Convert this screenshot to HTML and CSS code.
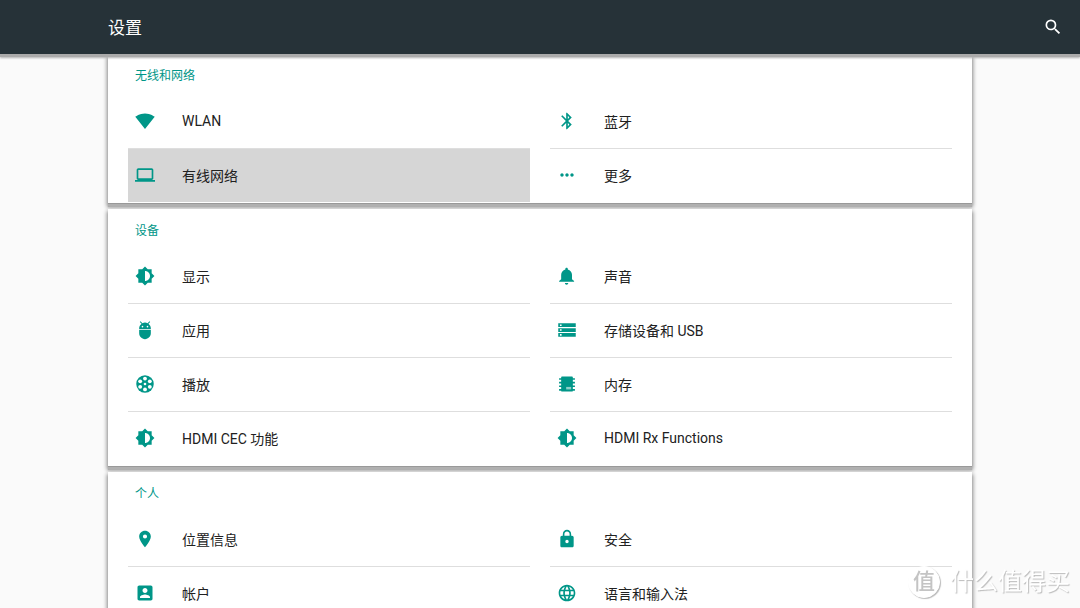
FILE: index.html
```html
<!DOCTYPE html>
<html lang="zh-CN">
<head>
<meta charset="utf-8">
<meta name="viewport" content="width=device-width, initial-scale=1">
<title>设置</title>
<link rel="stylesheet" href="styles.css">
</head>
<body>
<svg class="sprite" aria-hidden="true">
  <symbol id="brightness" viewBox="0 0 24 24"><path d="M20 15.31L23.31 12 20 8.69V4h-4.69L12 .69 8.69 4H4v4.69L.69 12 4 15.31V20h4.69L12 23.31 15.31 20H20v-4.69zM12 18V6c3.31 0 6 2.69 6 6s-2.69 6-6 6z"/></symbol>
</svg>
<header class="bar">
  <h1 class="bar-title">设置</h1>
  <button class="search" type="button" aria-label="搜索">
    <svg class="icon" viewBox="0 0 24 24"><path d="M15.5 14h-.79l-.28-.27A6.47 6.47 0 0 0 16 9.5 6.5 6.5 0 1 0 9.5 16c1.61 0 3.09-.59 4.23-1.57l.27.28v.79l5 4.99L20.49 19l-4.99-5zm-6 0C7.01 14 5 11.99 5 9.5S7.01 5 9.5 5 14 7.01 14 9.5 11.99 14 9.5 14z"/></svg>
  </button>
</header>
<main class="content">
  <section class="card">
    <h2 class="card-title">无线和网络</h2>
    <nav class="grid">
      <a class="item" href="#"><svg class="icon" viewBox="0 0 24 24"><path d="M12.01 21.49L23.64 7c-.45-.34-4.93-4-11.64-4C5.28 3 .81 6.66.36 7l11.63 14.49.01.01.01-.01z"/></svg>WLAN</a>
      <a class="item" href="#"><svg class="icon" viewBox="0 0 24 24"><path d="M17.71 7.71L12 2h-1v7.59L6.41 5 5 6.41 10.59 12 5 17.59 6.41 19 11 14.41V22h1l5.71-5.71-4.3-4.29 4.3-4.29zM13 5.83l1.88 1.88L13 9.59V5.83zm1.88 10.46L13 18.17v-3.76l1.88 1.88z"/></svg>蓝牙</a>
      <a class="item selected" href="#"><svg class="icon" viewBox="0 0 24 24"><path d="M20 18c1.100 0 1.990-.9 1.990-2L22 6c0-1.100-.9-2-2-2H4c-1.100 0-2 .9-2 2v10c0 1.100.9 2 2 2H0v2h24v-2h-4zM4 6h16v10H4V6z"/></svg>有线网络</a>
      <a class="item" href="#"><svg class="icon" viewBox="0 0 24 24"><path d="M6 10c-1.100 0-2 .9-2 2s.9 2 2 2 2-.9 2-2-.9-2-2-2zm12 0c-1.100 0-2 .9-2 2s.9 2 2 2 2-.9 2-2-.9-2-2-2zm-6 0c-1.100 0-2 .9-2 2s.9 2 2 2 2-.9 2-2-.9-2-2-2z"/></svg>更多</a>
    </nav>
  </section>
  <section class="card">
    <h2 class="card-title">设备</h2>
    <nav class="grid">
      <a class="item" href="#"><svg class="icon"><use href="#brightness"/></svg>显示</a>
      <a class="item" href="#"><svg class="icon" viewBox="0 0 24 24"><path d="M11.500 22.500c1.100 0 2-.9 2-2h-4c0 1.100.9 2 2 2zm6.500-6.500v-5.500c0-3.070-2.130-5.640-5-6.320V3.500c0-.83-.67-1.500-1.500-1.500S10 2.670 10 3.500v.68c-2.870.68-5 3.250-5 6.320V16l-2.500 2v1h18v-1L18 16z"/></svg>声音</a>
      <a class="item" href="#"><svg class="icon" viewBox="0 0 24 24"><path d="M5 16c0 3.870 3.130 7 7 7s7-3.130 7-7v-4H5v4zM16.120 4.370l2.100-2.100-.82-.83-2.300 2.310C14.160 3.280 13.120 3 12 3s-2.160.28-3.090.75L6.600 1.440l-.82.83 2.100 2.100C6.140 5.640 5 7.680 5 10v1h14v-1c0-2.320-1.140-4.360-2.880-5.630zM9 9c-.55 0-1-.45-1-1s.45-1 1-1 1 .45 1 1-.45 1-1 1zm6 0c-.55 0-1-.45-1-1s.45-1 1-1 1 .45 1 1-.45 1-1 1z"/></svg>应用</a>
      <a class="item" href="#"><svg class="icon" viewBox="0 0 24 24"><path d="M1.500 20h21v-4.500h-21V20zm2-3.250h2v2h-2v-2zM1.500 4v4.500h21V4h-21zm4 3.250h-2v-2h2v2zM1.500 14.250h21v-4.500h-21v4.500zM3.500 11h2v2h-2v-2z"/></svg>存储设备和 USB</a>
      <a class="item" href="#"><svg class="icon" viewBox="0 0 24 24"><circle cx="12" cy="12" r="10.500"/><g class="hole"><circle cx="12" cy="12" r="1.600"/><circle cx="12" cy="5.500" r="2.300"/><circle cx="17.800" cy="8.800" r="2.300"/><circle cx="17.800" cy="15.400" r="2.300"/><circle cx="12" cy="18.500" r="2.300"/><circle cx="6.200" cy="15.400" r="2.300"/><circle cx="6.200" cy="8.800" r="2.300"/></g></svg>播放</a>
      <a class="item" href="#"><svg class="icon" viewBox="0 0 24 24"><path d="M5 4q0-1 1-1h12q1 0 1 1v1h2.500v2H19v2.300h2.500v2H19v2.400h2.500v2H19V18h2.500v2H19q0 1-1 1H6q-1 0-1-1H2.500v-2H5v-2.300H2.500v-2H5v-2.400H2.500v-2H5V7H2.500V5H5z"/><path class="chip" d="M11 15.500h6v3h-6z"/></svg>内存</a>
      <a class="item" href="#"><svg class="icon"><use href="#brightness"/></svg>HDMI CEC 功能</a>
      <a class="item" href="#"><svg class="icon"><use href="#brightness"/></svg>HDMI Rx Functions</a>
    </nav>
  </section>
  <section class="card">
    <h2 class="card-title">个人</h2>
    <nav class="grid">
      <a class="item" href="#"><svg class="icon" viewBox="0 0 24 24"><path d="M12 2C8.130 2 5 5.130 5 9c0 5.250 7 13 7 13s7-7.750 7-13c0-3.870-3.130-7-7-7zm0 9.500a2.500 2.500 0 0 1 0-5 2.500 2.500 0 0 1 0 5z"/></svg>位置信息</a>
      <a class="item" href="#"><svg class="icon" viewBox="0 0 24 24"><path d="M18 8h-1V6c0-2.760-2.240-5-5-5S7 3.240 7 6v2H6c-1.100 0-2 .9-2 2v10c0 1.100.9 2 2 2h12c1.100 0 2-.9 2-2V10c0-1.100-.9-2-2-2zm-6 9c-1.100 0-2-.9-2-2s.9-2 2-2 2 .9 2 2-.9 2-2 2zm3.100-9H8.900V6c0-1.710 1.390-3.100 3.100-3.100s3.100 1.390 3.100 3.100v2z"/></svg>安全</a>
      <a class="item" href="#"><svg class="icon" viewBox="0 0 24 24"><path d="M3 5v14c0 1.100.89 2 2 2h14c1.100 0 2-.9 2-2V5c0-1.100-.9-2-2-2H5c-1.110 0-2 .9-2 2zm12 4c0 1.660-1.340 3-3 3s-3-1.340-3-3 1.340-3 3-3 3 1.340 3 3zm-9 8c0-2 4-3.100 6-3.100s6 1.100 6 3.100v1H6v-1z"/></svg>帐户</a>
      <a class="item" href="#"><svg class="icon" viewBox="0 0 24 24"><path d="M11.990 2C6.470 2 2 6.480 2 12s4.470 10 9.990 10C17.520 22 22 17.520 22 12S17.520 2 11.990 2zm6.930 6h-2.950c-.32-1.250-.78-2.450-1.380-3.560 1.840.63 3.370 1.910 4.330 3.560zM12 4.040c.83 1.200 1.480 2.530 1.910 3.960h-3.820c.43-1.430 1.080-2.760 1.910-3.960zM4.260 14C4.100 13.360 4 12.690 4 12s.1-1.360.26-2h3.380c-.08.66-.14 1.320-.14 2s.06 1.340.14 2H4.260zm.82 2h2.950c.32 1.250.78 2.450 1.380 3.560-1.840-.63-3.370-1.900-4.330-3.560zm2.950-8H5.080c.96-1.660 2.490-2.930 4.330-3.560C8.810 5.550 8.350 6.750 8.030 8zM12 19.960c-.83-1.200-1.480-2.530-1.910-3.960h3.820c-.43 1.430-1.080 2.760-1.910 3.960zM14.340 14H9.660c-.09-.66-.16-1.320-.16-2s.07-1.350.16-2h4.680c.09.65.16 1.320.16 2s-.07 1.340-.16 2zm.25 5.560c.6-1.110 1.060-2.310 1.380-3.560h2.950c-.96 1.650-2.490 2.930-4.330 3.560zM16.360 14c.08-.66.14-1.320.14-2s-.06-1.340-.14-2h3.380c.16.64.26 1.310.26 2s-.1 1.360-.26 2h-3.380z"/></svg>语言和输入法</a>
    </nav>
  </section>
</main>
<div class="watermark"><span class="seal">值</span><span>什么值得买</span></div>
</body>
</html>
```

FILE: styles.css
```css
* {
  box-sizing: border-box;
}

body {
  display: flex;
  flex-direction: column;
  height: 100vh;
  margin: 0;
  overflow: hidden;
  background: #fafafa;
  color: #212121;
  font-family: Roboto, "Noto Sans CJK SC", sans-serif;
  font-size: 14px;
}

.sprite {
  display: none;
}

.icon {
  flex: none;
  width: 20px;
  height: 20px;
  fill: currentColor;
}

.bar {
  position: relative;
  z-index: 1;
  display: flex;
  flex: none;
  align-items: center;
  justify-content: space-between;
  height: 54px;
  padding: 0 17px 1px 10%;
  background: #263238;
  color: #fff;
  box-shadow: 0 3px 0 #aaa, 0 4px 2px #b0b0b0;
}

.bar-title {
  margin: 0;
  font-size: 17px;
  font-weight: 400;
}

.search {
  display: flex;
  padding: 0;
  border: 0;
  background: none;
  color: inherit;
}

.content {
  display: flex;
  flex: 1;
  flex-direction: column;
  gap: 6px;
  min-height: 0;
  padding: 0 10%;
  overflow-y: auto;
  scrollbar-width: none;
}

.card {
  flex: none;
  padding: 0 20px 1px;
  background: #fff;
  box-shadow: 0 1px 0 #999, 0 4px 1px #b0b0b0, 0 3px 4px 1px #888;
}

.card-title {
  margin: 0;
  padding: 4px 7px 0;
  color: #009688;
  font-size: 12px;
  font-weight: 400;
  line-height: 36px;
}

.grid {
  display: grid;
  grid-template-columns: 1fr 1fr;
  column-gap: 20px;
}

.item {
  display: flex;
  align-items: center;
  gap: 27px;
  height: 54px;
  padding: 0 7px 2px;
  border-top: 1px solid #dedede;
  color: inherit;
  text-decoration: none;
}

.item:nth-child(-n + 2) {
  border-top-color: transparent;
}

.item .icon {
  color: #009688;
}

.item.selected {
  background: #d6d6d6;
}

.hole {
  fill: #fff;
}

.chip {
  fill: #8fd0c9;
}

.watermark {
  position: fixed;
  right: 10px;
  bottom: 8px;
  display: flex;
  align-items: center;
  gap: 10px;
  color: #fff;
  font-size: 24px;
  line-height: 36px;
  text-shadow: 1px 1px 1px #bbb;
  pointer-events: none;
}

.seal {
  width: 32px;
  height: 32px;
  border: 1px solid #fff;
  border-radius: 50%;
  background: #fff;
  box-shadow: 1px 1px 1px #bbb;
  color: #c4c4c4;
  font-weight: 500;
  font-size: 22px;
  line-height: 30px;
  text-align: center;
  text-shadow: none;
}
```
